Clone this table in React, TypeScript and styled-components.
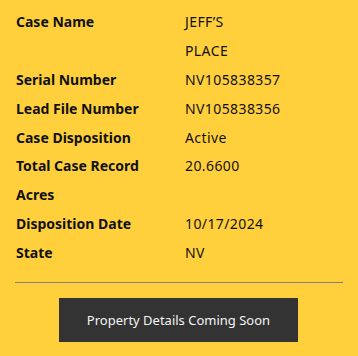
import React from "react";
import styled, { createGlobalStyle } from "styled-components";

const Global = createGlobalStyle`
  html, body { margin: 0; padding: 0; background: #FFD03B; }
  body { font-family: "Noto Sans", "DejaVu Sans", sans-serif; }
`;

const Panel = styled.div`
  width: 358px;
  height: 356px;
  box-sizing: border-box;
  background: #FFD03B;
  padding: 8px 15px 0 16px;
`;

const Grid = styled.div`
  display: grid;
  grid-template-columns: 169px 80px;
  font-size: 14px;
  line-height: 28.875px;
  color: #111;
`;

const Label = styled.div`
  font-weight: 700;
  padding-right: 40px;
`;

const Value = styled.div`
  letter-spacing: 0.4px;
  white-space: normal;
`;

const Divider = styled.hr`
  margin: 14px 0 0 -1px;
  border: 0;
  border-top: 1px solid #808080;
`;

const ButtonRow = styled.div`
  display: flex;
  justify-content: center;
  padding-top: 15px;
  padding-right: 2px;
`;

const Button = styled.button`
  width: 239px;
  height: 44px;
  background: #333333;
  color: #f4f4f4;
  border: 0;
  font-family: "Noto Sans", sans-serif;
  font-size: 13px;
`;

const rows: [string, string][] = [
  ["Case Name", "JEFF\u2019S PLACE"],
  ["Serial Number", "NV105838357"],
  ["Lead File Number", "NV105838356"],
  ["Case Disposition", "Active"],
  ["Total Case Record Acres", "20.6600"],
  ["Disposition Date", "10/17/2024"],
  ["State", "NV"],
];

export default function App() {
  return (
    <Panel>
      <Global />
      <Grid>
        {rows.map(([l, v]) => (
          <React.Fragment key={l}>
            <Label>{l}</Label>
            <Value>{v}</Value>
          </React.Fragment>
        ))}
      </Grid>
      <Divider />
      <ButtonRow>
        <Button>Property Details Coming Soon</Button>
      </ButtonRow>
    </Panel>
  );
}
